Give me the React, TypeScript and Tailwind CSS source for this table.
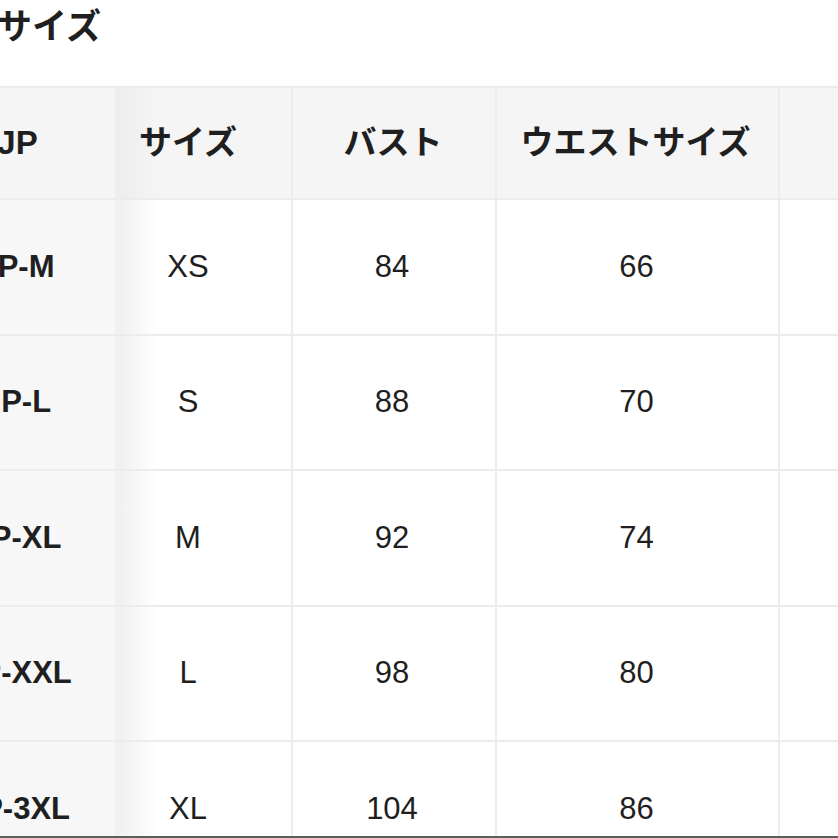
import React from "react";

const rows = [
  { jp: "JP-M", size: "XS", bust: "84", waist: "66" },
  { jp: "JP-L", size: "S", bust: "88", waist: "70" },
  { jp: "JP-XL", size: "M", bust: "92", waist: "74" },
  { jp: "JP-XXL", size: "L", bust: "98", waist: "80" },
  { jp: "JP-3XL", size: "XL", bust: "104", waist: "86" },
];

const font = { fontFamily: '"Liberation Sans", "Noto Sans CJK JP", sans-serif' };

export default function App() {
  return (
    <div className="flex h-[838px] w-[838px] flex-col overflow-hidden bg-white text-[#1f1f1f]" style={font}>
      <div className="flex-1 overflow-hidden">
        <h1 className="ml-[-3px] pt-[4px] text-[35px] font-bold leading-[46px]">サイズ</h1>

        <div className="ml-[-83px] mt-[36px] w-[1100px] border-t-2 border-[#ececec]">
          {/* header */}
          <div className="flex h-[112px] border-b-2 border-[#ececec] bg-[#f5f5f5] text-[33px] font-bold">
            <div className="flex w-[200px] items-center justify-center border-r-2 border-[#efefef] pl-[3px]">JP</div>
            <div className="flex w-[174px] items-center justify-center bg-[linear-gradient(to_right,rgba(0,0,0,0.035),transparent_40px)] pr-[32px]">
              サイズ
            </div>
            <div className="flex w-[204px] items-center justify-center border-l-2 border-[#ececec] pr-[2px]">バスト</div>
            <div className="flex w-[283px] items-center justify-center border-l-2 border-[#ececec] pr-[4px]">ウエストサイズ</div>
            <div className="flex w-[200px] items-center justify-center border-l-2 border-[#ececec]"></div>
          </div>

          {rows.map((r) => (
            <div key={r.jp} className="flex h-[135.5px] border-b-2 border-[#ececec] text-[31px]">
              <div className="flex w-[200px] items-center justify-center border-r-2 border-[#f0f0f0] bg-[#f7f7f7] pl-[3px] font-bold">
                {r.jp}
              </div>
              <div className="flex w-[174px] items-center justify-center bg-[linear-gradient(to_right,#f0f0f0,#ffffff_40px)] pr-[32px]">
                {r.size}
              </div>
              <div className="flex w-[204px] items-center justify-center border-l-2 border-[#ececec] pr-[4px]">{r.bust}</div>
              <div className="flex w-[283px] items-center justify-center border-l-2 border-[#ececec] pr-[2px]">{r.waist}</div>
              <div className="flex w-[200px] items-center justify-center border-l-2 border-[#ececec]"></div>
            </div>
          ))}
        </div>
      </div>
      <div className="h-[2px] bg-[#5c5c5c]" />
    </div>
  );
}
